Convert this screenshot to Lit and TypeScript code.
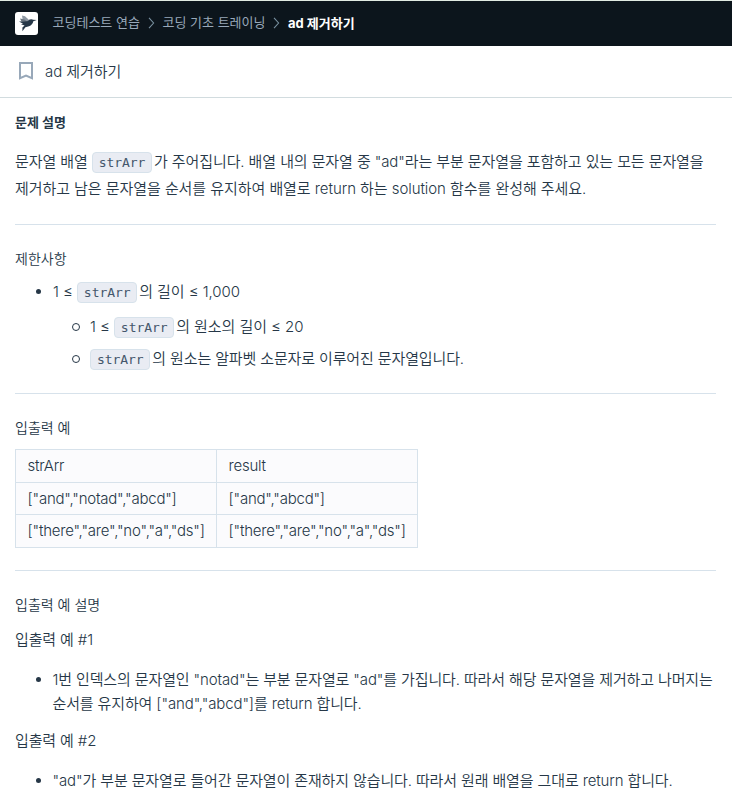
import { LitElement, html, css } from "lit";
import { customElement } from "lit/decorators.js";

const chevron = html`<svg class="chevron" viewBox="0 0 7 12" width="7" height="12"><path d="M1 .8 5.6 6 1 11.2" fill="none" stroke="#78909f" stroke-width="1.1"/></svg>`;
const rows = [
  ["strArr", "result"],
  ['["and","notad","abcd"]', '["and","abcd"]'],
  ['["there","are","no","a","ds"]', '["there","are","no","a","ds"]'],
];

@customElement("app-root")
export class AppRoot extends LitElement {
  static styles = css`
    :host { display: block; height: 810px; overflow: hidden; background: #fff; color: #263747;
      font-family: Inter, "Noto Sans CJK KR", sans-serif; font-size: 15px; font-weight: 350; }
    * { box-sizing: border-box; }
    .top { height: 46px; border-top: 1px solid #e1ebe2; background: #0c151c; display: flex; align-items: center; padding: 0 0 1px 15px; font-size: 13px; color: #98a8b9; white-space: nowrap; font-weight: 400; }
    .logo { width: 23px; height: 23px; margin-right: 15px; }
    .crumb1 { width: 88px; margin: -4px 0 0 -0.5px; }
    .crumb2 { width: 103px; margin: -4px 0 0 -0.5px; }
    .chevron { margin: 0 8px 0 7.5px; flex: none; }
    .current { color: #fff; font-weight: 700; font-size: 13px; margin-top: -2px; }
    .title { height: 52px; border-bottom: 1px solid #d2dcdf; display: flex; align-items: center; padding: 0 0 1px 19px; }
    .title span { margin-top: -2px; letter-spacing: -0.08px; }
    .mark { margin-right: 12px; }
    main { padding: 0 16px 0 15px; }
    h6 { margin: 0; font-size: 14px; font-weight: 350; height: 24px; line-height: 24px; }
    .strong { font-weight: 700; font-size: 13px; margin-top: 12px; }
    p { margin: 0; }
    .line { display: block; height: 27px; line-height: 27px; white-space: nowrap; letter-spacing: -0.13px; }
    .loose { letter-spacing: -0.06px; }
    .lead { letter-spacing: -0.1px; }
    .intro { margin-top: 14px; }
    hr { border: 0; height: 1px; background: #d7e2eb; margin: 22px 0; }
    code { display: inline-block; vertical-align: top; margin: 4px 2px 0 0.3px; width: 60px; height: 21px; border: 1px solid #d7e2eb; border-radius: 4px; background: #e9ecf3; color: #44576c; font: 400 13px/19px "DejaVu Sans Mono", monospace; text-align: center; letter-spacing: -0.05px; }
    ul { list-style: none; margin: 0; padding: 0 0 0 38px; }
    li { position: relative; }
    li::before { content: ""; position: absolute; left: -17px; top: 11px; width: 5px; height: 5px; border-radius: 50%; background: #263747; }
    ul ul li::before { background: none; border: 1px solid #263747; left: -18px; top: 10px; width: 6px; height: 6px; }
    .l1 { margin-top: 7px; }
    .nested { margin-top: 8px; padding-left: 37px; }
    .l3 { margin-top: 5px; }
    .limits { margin-top: 21px; }
    table { border-collapse: collapse; margin-top: 9px; table-layout: fixed; width: 403px; background: #fbfbfd; }
    td { border: 1px solid #d7e2eb; padding: 0 0 0 11.5px; height: 32.5px; line-height: 31px; white-space: nowrap; letter-spacing: -0.22px; }
    .ex1 { margin-top: 9px; }
    .li1 { margin-top: 15px; margin-left: -0.5px; }
    .li1 .line, .li2 .line { height: 24px; line-height: 24px; }
    .li1 li::before, .li2 li::before { top: 9px; }
    .ex2 { margin-top: 11px; }
    .li2 { margin-top: 15px; margin-left: -0.5px; }
  `;
  render() {
    return html`
      <header class="top">
        <svg class="logo" viewBox="0 0 23 23"><rect width="23" height="23" rx="3" fill="#fff"/>
          <path d="M7 3.6 10 4.2 13.8 7.8 12 10.5 7.6 7.6Z" fill="#8e98a3"/><path d="M5 6.4 9.5 7.4 12.5 10 6.5 9.4Z" fill="#69747f"/><path d="M4 9.4 12.2 9.2 14.6 7.6Q16.8 6.6 18.2 7.8L21.8 8 18.3 9.2Q17.6 12.8 14 14.3L10.4 15.3 7.4 19.2 7.4 15.6 9.6 13.4 6 12.2 8 11.7Z" fill="#263747"/></svg>
        <span class="crumb1">코딩테스트 연습</span>${chevron}<span class="crumb2">코딩 기초 트레이닝</span>${chevron}<span class="current">ad 제거하기</span>
      </header>
      <div class="title"><svg class="mark" width="14" height="18" viewBox="0 0 14 18"><path d="M1 1H13V16.2L7 13.5 1 16.2Z" fill="none" stroke="#98a8b9" stroke-width="2"/></svg><span>ad 제거하기</span></div>
      <main>
        <h6 class="strong">문제 설명</h6>
        <p class="intro"><span class="line lead">문자열 배열 <code>strArr</code>가 주어집니다. 배열 내의 문자열 중 "ad"라는 부분 문자열을 포함하고 있는 모든 문자열을</span><span class="line loose">제거하고 남은 문자열을 순서를 유지하여 배열로 return 하는 solution 함수를 완성해 주세요.</span></p>
        <hr />
        <h6>제한사항</h6>
        <ul class="l1"><li><span class="line loose">1 ≤ <code>strArr</code>의 길이 ≤ 1,000</span>
          <ul class="nested"><li><span class="line loose">1 ≤ <code>strArr</code>의 원소의 길이 ≤ 20</span></li>
          <li class="l3"><span class="line"><code>strArr</code>의 원소는 알파벳 소문자로 이루어진 문자열입니다.</span></li></ul></li></ul>
        <hr class="limits" />
        <h6>입출력 예</h6>
        <table><tbody>${rows.map((r) => html`<tr>${r.map((c) => html`<td>${c}</td>`)}</tr>`)}</tbody></table>
        <hr />
        <h6>입출력 예 설명</h6>
        <p class="line ex1">입출력 예 #1</p>
        <ul class="li1"><li><span class="line">1번 인덱스의 문자열인 "notad"는 부분 문자열로 "ad"를 가집니다. 따라서 해당 문자열을 제거하고 나머지는</span><span class="line">순서를 유지하여 ["and","abcd"]를 return 합니다.</span></li></ul>
        <p class="line ex2">입출력 예 #2</p>
        <ul class="li2"><li><span class="line">"ad"가 부분 문자열로 들어간 문자열이 존재하지 않습니다. 따라서 원래 배열을 그대로 return 합니다.</span></li></ul>
      </main>`;
  }
}
